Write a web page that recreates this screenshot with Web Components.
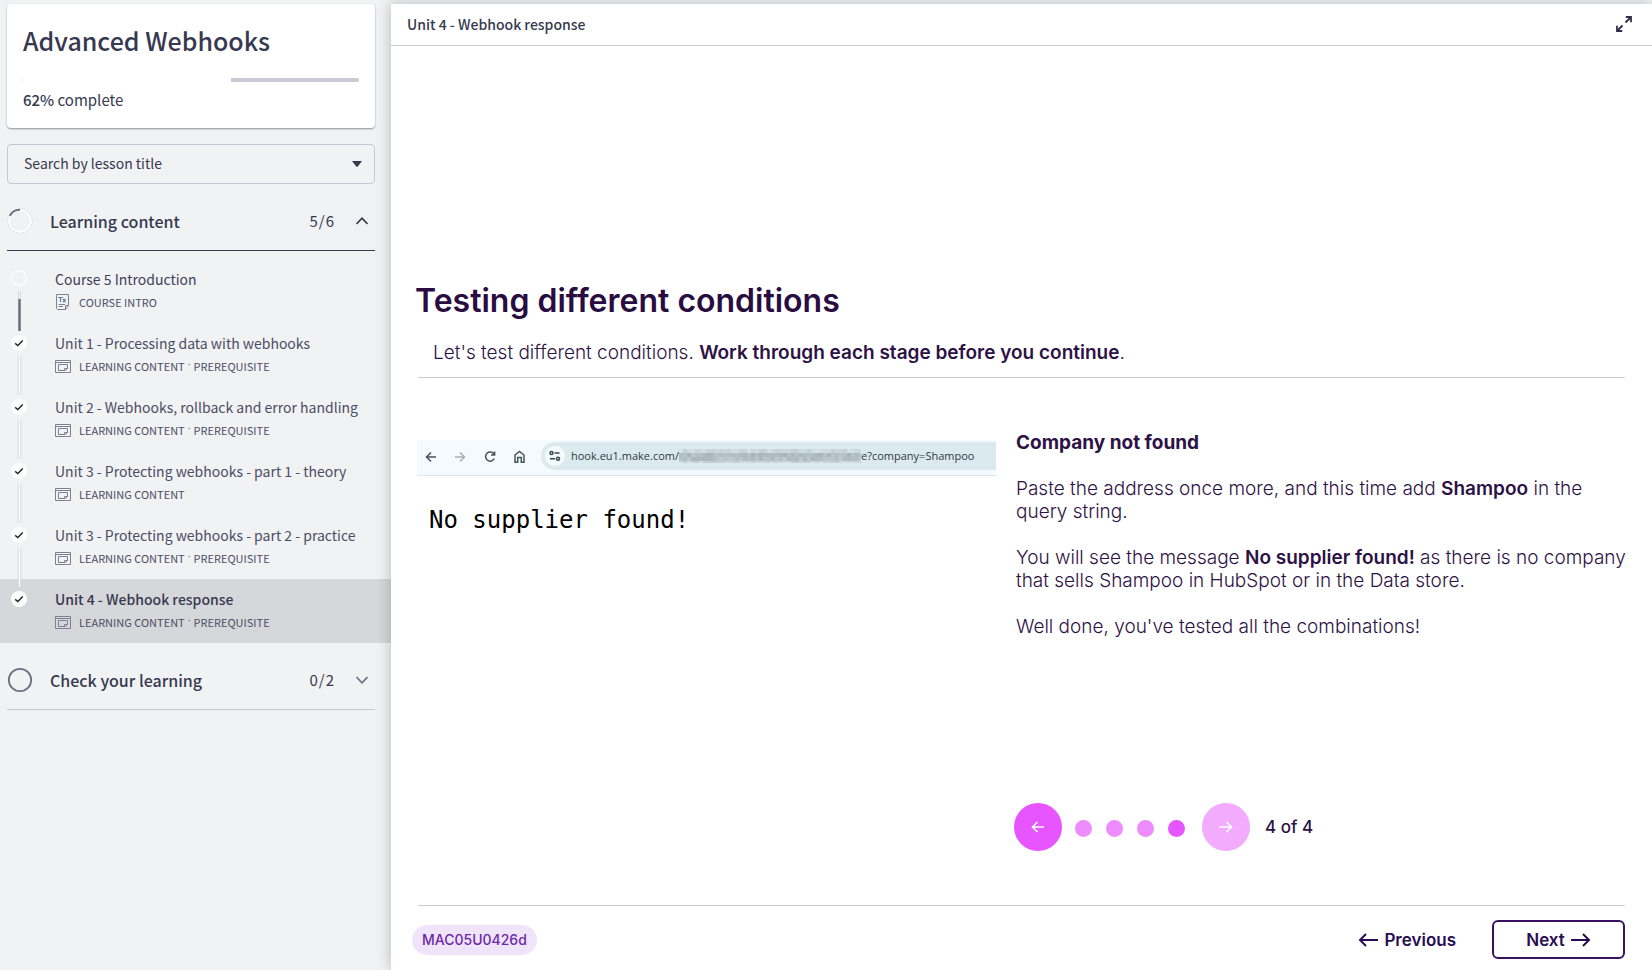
<!DOCTYPE html>
<html lang="en">
<head>
<meta charset="utf-8">
<title>Advanced Webhooks</title>
<style>
html, body { margin: 0; height: 100%; }
body { background: #f1f2f4; font-family: "Noto Sans CJK SC", "Noto Sans", sans-serif; color: #36394f; }
</style>
</head>
<body>
<course-app></course-app>

<template id="t-app">
<style>
:host { display: flex; min-height: 100vh; overflow: hidden; }
course-sidebar { flex: 0 0 391px; }
lesson-view { flex: 1; min-width: 0; margin-top: 4px; }
</style>
<course-sidebar></course-sidebar>
<lesson-view></lesson-view>
</template>

<template id="t-sidebar">
<style>
:host { display: block; padding-top: 4px; }
.card, .search { margin: 0 16px 16px 7px; }
.card { background: #fff; border-radius: 4px; height: 124px; box-sizing: border-box; padding: 16px 16px 0; box-shadow: 0 1px 2px rgba(0,0,0,.4); }
h1 { margin: 0 0 18px; font-size: 25px; line-height: 40px; font-weight: 500; }
.bar { height: 4px; border-radius: 2px; background: #c9cad7; overflow: hidden; }
.bar div { width: 62%; height: 100%; background: #fff; }
.pct { margin: 8px 0 0; font-size: 15px; line-height: 20px; }
.pct b { font-weight: 500; }
.search { display: grid; align-items: center; margin-bottom: 8px; }
.search > * { grid-area: 1 / 1; }
select { appearance: none; width: 100%; height: 40px; box-sizing: border-box; border: 1px solid #c5c7d5; border-radius: 4px; background: transparent; padding: 0 16px 2px; font: 14px/20px "Noto Sans CJK SC", sans-serif; color: #36394f; }
.search svg { justify-self: end; margin-right: 13px; pointer-events: none; }
</style>
<div class="card">
  <h1>Advanced Webhooks</h1>
  <div class="bar" role="progressbar" aria-valuenow="62" aria-label="Course progress"><div></div></div>
  <p class="pct"><b>62%</b> complete</p>
</div>
<div class="search">
  <select aria-label="Search by lesson title"><option>Search by lesson title</option></select>
  <svg width="10" height="6"><path d="M0 0H10L5.8 5.4Q5 6 4.2 5.4Z" fill="#36394f"/></svg>
</div>
<nav aria-label="Course lessons">
  <course-section open count="5/6">Learning content</course-section>
  <lesson-item state="open" kind="text" meta="COURSE INTRO">Course 5 Introduction</lesson-item>
  <lesson-item state="done" meta="LEARNING CONTENT" required>Unit 1 - Processing data with webhooks</lesson-item>
  <lesson-item state="done" meta="LEARNING CONTENT" required>Unit 2 - Webhooks, rollback and error handling</lesson-item>
  <lesson-item state="done" meta="LEARNING CONTENT">Unit 3 - Protecting webhooks - part 1 - theory</lesson-item>
  <lesson-item state="done" meta="LEARNING CONTENT" required>Unit 3 - Protecting webhooks - part 2 - practice</lesson-item>
  <lesson-item state="done" active meta="LEARNING CONTENT" required>Unit 4 - Webhook response</lesson-item>
  <course-section count="0/2">Check your learning</course-section>
</nav>
</template>

<template id="t-section">
<style>
:host { display: block; margin: 0 16px 8px 7px; }
:host(:not([open])) { margin-top: 8px; }
button { display: flex; align-items: center; width: 100%; height: 59px; box-sizing: border-box; padding: 0 7px 0 0; border: 0; border-bottom: 1px solid #c5c7d5; background: none; font: 500 16px/24px "Noto Sans CJK SC", sans-serif; color: inherit; text-align: left; }
:host([open]) button { border-bottom-color: #36394f; }
.ring { margin-right: 17px; }
.name { flex: 1; }
.count { font-size: 15px; font-weight: 400; letter-spacing: 1px; margin-right: 21px; }
.open-only { display: none; }
:host([open]) .open-only { display: block; }
:host([open]) .closed-only { display: none; }
</style>
<button type="button">
  <svg class="ring open-only" width="26" height="26" fill="none"><circle cx="13" cy="13" r="12" stroke="#cfd0d6" stroke-width="1" stroke-dasharray="2 1"/><circle cx="13" cy="13" r="11" stroke="#fff" stroke-width="1.6"/><path d="M2.8 7.8A11.3 11.3 0 0 1 13 1.8" stroke="#6b6c80" stroke-width="2"/></svg>
  <svg class="ring closed-only" width="26" height="26" fill="none"><circle cx="13" cy="13" r="11.2" stroke="#6b6e86" stroke-width="1.8"/></svg>
  <span class="name"><slot></slot></span>
  <span class="count"></span>
  <svg class="open-only" width="12" height="8" fill="none" stroke="#36394f" stroke-width="1.6"><path d="M.5 7L6 1.2L11.5 7"/></svg>
  <svg class="closed-only" width="12" height="8" fill="none" stroke="#6b6e86" stroke-width="1.6"><path d="M.5 1L6 6.8L11.5 1"/></svg>
</button>
</template>

<template id="t-item">
<style>
:host { display: block; }
:host([active]) { background: #d6d7db; }
a { display: flex; height: 64px; color: #4b4d63; text-decoration: none; padding-left: 11px; }
:host([kind]) a { color: #3f4158; }
.rail { flex: 0 0 16px; margin-right: 28px; padding-top: 12px; display: block; }
.rail svg { display: block; overflow: visible; }
.body { display: block; padding-top: 8px; min-width: 0; }
.title { display: block; font-size: 14px; line-height: 24px; white-space: nowrap; }
:host([active]) .title { font-weight: 500; color: #36394f; }
.meta { display: flex; align-items: center; height: 22px; font-size: 11px; line-height: 16px; color: #4b4d63; }
.meta svg { margin-right: 8px; }
.required { display: none; }
:host([required]) .required { display: flex; }
.required::before { content: "·"; font-family: Roboto, sans-serif; padding: 0 3px; }
.text, .open, .done { display: none !important; }
:host([kind]) .text { display: block !important; }
:host([kind]) .page { display: none; }
:host([state=open]) .open, :host([state=done]) .done { display: block !important; }
:host([active]) .track { display: none; }
</style>
<a href="#">
  <span class="rail">
    <svg class="open" width="16" height="62" fill="none"><circle cx="8" cy="7" r="7.3" stroke="#fff" stroke-width="1.2"/><path d="M7.5 20V60M9.5 20V60" stroke="#d9dade"/><path d="M8.5 28V60" stroke="#6b6c80" stroke-width="2.4"/></svg>
    <svg class="done" width="16" height="62" fill="none"><circle cx="8" cy="8" r="8" fill="#fff"/><path d="M4.2 8.4L6.8 10.6L11.8 5.4" stroke="#22232b" stroke-width="1.4"/><g class="track"><path d="M8.5 20V60" stroke="#fff" stroke-width="1.4"/><path d="M7.2 20V60M9.8 20V60" stroke="#d6d7dc"/></g></svg>
  </span>
  <span class="body">
    <span class="title"><slot></slot></span>
    <span class="meta">
      <svg class="page" width="16" height="13" fill="none" stroke="#7e8093"><path d="M.5 .5H15.5V12.5H.5ZM.5 2.5H15.5M3.5 4.5H12.5V8.5L10.5 10.5H3.5ZM9.5 10.5V8.5H12.5"/></svg>
      <svg class="text" width="16" height="16" fill="none" stroke="#7e8093"><path d="M1.5 .5H13.5V11.5L10.5 15.5H2.5L1.5 14.5ZM13.5 11.5H10.5V15.5M3.5 10.5H10M3.5 12.5H8"/><path d="M3 3.5H8M5.5 3.5V8M8 5L10.5 8M10.5 5L8 8" stroke="#5f7fa5" stroke-width="1.2"/></svg>
      <span class="kind"></span><span class="required">PREREQUISITE</span>
    </span>
  </span>
</a>
</template>

<template id="t-view">
<style>
:host { display: flex; flex-direction: column; background: #fff; box-shadow: 0 0 14px rgba(0,0,0,.24); font-family: Inter, sans-serif; color: #2d1245; }
header { display: flex; align-items: center; justify-content: space-between; height: 42px; box-sizing: border-box; border-bottom: 1px solid #c9cad7; padding: 0 20px 2px 16px; font: 500 14px/20px "Noto Sans CJK SC", sans-serif; color: #36394f; }
button { font-family: inherit; cursor: pointer; }
.icon { border: 0; background: none; padding: 0; display: flex; }
main { flex: 1; display: flex; flex-direction: column; padding: 231px 27px 11px 27px; }
h2 { margin: 0 0 0 -3px; padding: 0 0 12px; font-size: 32px; line-height: 48px; font-weight: 600; color: #290d41; }
.lead { margin: 0; padding: 4px 15px 13px; font-size: 19px; line-height: 23px; font-weight: 300; border-bottom: 1px solid #d2cccf; }
.cols { display: grid; grid-template-columns: 579px 1fr; column-gap: 20px; align-items: start; flex: 1; padding-top: 52px; margin-left: -1px; }
.copy { display: flex; flex-direction: column; height: 100%; margin-right: -12px; }
browser-shot { margin-top: 10px; }
h3 { margin: 0 0 22px; font-size: 19px; line-height: 25px; font-weight: 700; }
.copy p { margin: 0 0 23px; font-size: 19px; line-height: 23px; font-weight: 300; }
b { font-weight: 600; }
slide-pager { margin-top: auto; margin-bottom: 54px; }
footer { display: flex; align-items: center; border-top: 1px solid #d2cccf; padding-top: 14px; }
.tag { background: #f0e4fb; color: #6d28a8; font-size: 14px; line-height: 30px; font-weight: 500; border-radius: 15px; padding: 0 10px; margin-left: -6px; margin-right: auto; }
.nav { display: flex; align-items: center; justify-content: center; gap: 6px; box-sizing: border-box; height: 39px; background: #fff; border: 0; padding: 0; color: #290d54; font-size: 17px; font-weight: 600; }
.next { width: 133px; border: 2px solid #39125f; border-radius: 6px; margin-left: 36px; }
</style>
<header><span>Unit 4 - Webhook response</span>
  <button class="icon" type="button" aria-label="Full screen"><svg width="16" height="16" fill="none" stroke="#2c2f48" stroke-width="1.8"><path d="M9.5 6.5L14.5 1.5M9.8 1H15V6.2M6.5 9.5L1.5 14.5M1 9.8V15H6.2"/></svg></button>
</header>
<main>
  <h2>Testing different conditions</h2>
  <p class="lead">Let's test different conditions. <b>Work through each stage before you continue</b>.</p>
  <div class="cols">
    <browser-shot>No supplier found!</browser-shot>
    <div class="copy">
      <h3>Company not found</h3>
      <p>Paste the address once more, and this time add <b>Shampoo</b> in the query string.</p>
      <p>You will see the message <b>No supplier found!</b> as there is no company that sells Shampoo in HubSpot or in the Data store.</p>
      <p>Well done, you've tested all the combinations!</p>
      <slide-pager></slide-pager>
    </div>
  </div>
  <footer>
    <span class="tag">MAC05U0426d</span>
    <button class="nav" type="button"><svg width="20" height="14" fill="none" stroke="currentColor" stroke-width="2"><path d="M20 7H2M8 1L2 7L8 13"/></svg>Previous</button>
    <button class="nav next" type="button">Next<svg width="20" height="14" fill="none" stroke="currentColor" stroke-width="2"><path d="M0 7H18M12 1L18 7L12 13"/></svg></button>
  </footer>
</main>
</template>

<template id="t-shot">
<style>
:host { display: block; min-width: 0; }
.bar { display: flex; align-items: center; height: 36px; box-sizing: border-box; background: #f4fafd; border-bottom: 1px solid #dfe7ea; }
.bar > svg { flex: none; margin-bottom: 2px; }
.url { flex: 1; display: flex; align-items: center; height: 28px; margin-bottom: 3px; background: #dbeaef; border-radius: 14px 0 0 14px; padding-left: 4px; font: 11px/20px "Open Sans", "Noto Sans", sans-serif; color: #2f3b40; white-space: nowrap; }
.site { margin-right: 6px; flex: none; }
.mosaic { flex: none; }
.out { margin: 0; padding: 28px 12px 0; font: 24px/32px "DejaVu Sans Mono", monospace; color: #000; }
</style>
<div class="bar">
  <svg width="124" height="32" fill="none" stroke="#46535a" stroke-width="1.5"><path d="M19 16H10M14 11.5L9.5 16L14 20.5"/><path d="M38 16H47M43 11.5L47.5 16L43 20.5" stroke="#a9b0b4"/><path d="M77 13A4.6 4.6 0 1 0 77.3 17.5M77.6 10.5V14H74"/><path d="M98 21.2V14L102.5 10.5L107 14V21.2H104.3V16.5H100.7V21.2Z"/></svg>
  <div class="url">
    <svg class="site" width="20" height="20" fill="none" stroke="#36474f" stroke-width="1.5"><circle cx="10" cy="10" r="10" fill="#f4fafd" stroke="none"/><circle cx="6.5" cy="7" r="1.5"/><path d="M9.5 7H14.5M5 12.8H10"/><circle cx="13" cy="12.8" r="1.5"/></svg>
    <span>hook.eu1.make.com/</span><svg class="mosaic" width="182" height="14"></svg><span>e?company=Shampoo</span>
  </div>
</div>
<p class="out"><slot></slot></p>
</template>

<template id="t-pager">
<style>
:host { display: flex; align-items: center; margin-left: -2px; }
button { border: 0; padding: 0; border-radius: 50%; background: #ed8bff; }
.arrow { width: 48px; height: 48px; display: grid; place-items: center; background: #e655ff; }
.arrow.off { background: #f2abff; }
.dots { display: flex; gap: 14px; margin: 2px 17px 0 13px; }
.dots button { width: 17px; height: 17px; }
.dots .on { background: #e655ff; }
span { font-size: 17px; line-height: 24px; font-weight: 500; margin-left: 15px; }
</style>
<button class="arrow" type="button" aria-label="Previous slide"><svg width="14" height="12" fill="none" stroke="#fff" stroke-width="1.7"><path d="M13 6H2M6.5 1L1.5 6L6.5 11"/></svg></button>
<div class="dots"><button type="button" aria-label="Slide 1"></button><button type="button" aria-label="Slide 2"></button><button type="button" aria-label="Slide 3"></button><button type="button" class="on" aria-label="Slide 4"></button></div>
<button class="arrow off" type="button" aria-label="Next slide"><svg width="14" height="12" fill="none" stroke="#fff" stroke-width="1.7"><path d="M0 6H12M7.5 1L12.5 6L7.5 11"/></svg></button>
<span>4 of 4</span>
</template>

<script>
const define = (name, id, setup) => customElements.define(name, class extends HTMLElement {
  constructor() {
    super();
    this.attachShadow({ mode: 'open' }).append(document.getElementById(id).content.cloneNode(true));
  }
  connectedCallback() { if (setup) setup(this, this.shadowRoot); }
});

define('course-section', 't-section', (el, root) => {
  root.querySelector('.count').textContent = el.getAttribute('count');
  root.querySelector('button').setAttribute('aria-expanded', el.hasAttribute('open'));
});
define('lesson-item', 't-item', (el, root) => {
  root.querySelector('.kind').textContent = el.getAttribute('meta');
  if (el.hasAttribute('active')) root.querySelector('a').setAttribute('aria-current', 'page');
});
/* The private part of the address is hidden behind a grey mosaic. */
define('browser-shot', 't-shot', (el, root) => {
  const svg = root.querySelector('.mosaic');
  const rows = [0.06, 0.36, 0.32, 0.08];
  let seed = 7;
  for (let y = 0; y < 4; y++) for (let x = 0; x < 46; x++) {
    seed = (seed * 16807) % 2147483647;
    const shade = rows[y] + (seed / 2147483647) * 0.22;
    const r = document.createElementNS('http://www.w3.org/2000/svg', 'rect');
    for (const [k, v] of Object.entries({ x: x * 4, y: y * 4, width: 4, height: 4, fill: '#7f8b90', opacity: shade })) r.setAttribute(k, v);
    svg.append(r);
  }
});
define('slide-pager', 't-pager');
define('course-sidebar', 't-sidebar');
define('lesson-view', 't-view');
define('course-app', 't-app');
</script>
</body>
</html>
